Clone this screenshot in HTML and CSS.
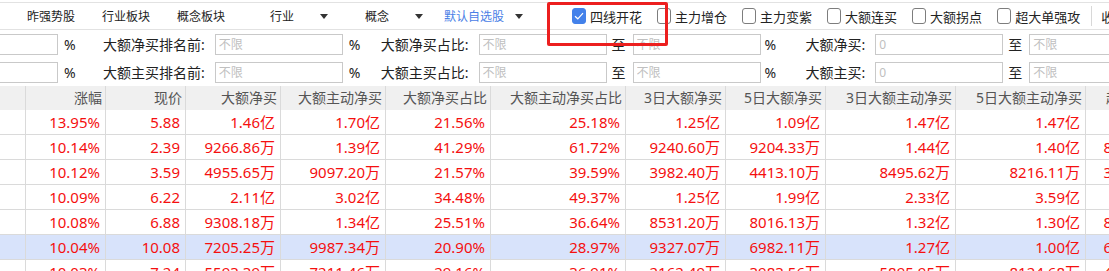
FILE: index.html
```html
<!DOCTYPE html>
<html lang="zh-CN">
<head>
  <meta charset="UTF-8" />
  <title>大额净买</title>
  <link rel="stylesheet" href="styles.css">
</head>
<body>

<div class="topbar">
  <span class="tab">昨强势股</span>
  <span class="tab">行业板块</span>
  <span class="tab">概念板块</span>
  <span class="dd dd-industry">行业<i class="arrow"></i></span>
  <span class="dd dd-concept">概念<i class="arrow"></i></span>
  <span class="dd dd-fav"><span class="fav">默认自选股</span><i class="arrow"></i></span>
  <label class="check first on"><span class="box"><svg width="10" height="8" viewBox="0 0 10 8"><path d="M1 4.2l2.8 2.6L9 1.2" fill="none" stroke="#fff" stroke-width="1.2"/></svg></span>四线开花</label>
  <label class="check"><span class="box"></span>主力增仓</label>
  <label class="check"><span class="box"></span>主力变紫</label>
  <label class="check"><span class="box"></span>大额连买</label>
  <label class="check"><span class="box"></span>大额拐点</label>
  <label class="check"><span class="box"></span>超大单强攻</label>
  <span class="sep"></span>
  <span class="more">收起</span>
</div>
<div class="mark"></div>

<div class="filters">
  <div class="frow">
    <input class="fin lead">
    <span class="unit u-lead">%</span>
    <span class="flabel">大额净买排名前:</span>
    <input class="fin" placeholder="不限">
    <span class="unit u-pct">%</span>
    <span class="flabel">大额净买占比:</span>
    <input class="fin" placeholder="不限">
    <span class="unit u-to">至</span>
    <input class="fin" placeholder="不限">
    <span class="unit u-lead u-mid">%</span>
    <span class="flabel">大额净买:</span>
    <input class="fin" placeholder="0">
    <span class="unit u-to">至</span>
    <input class="fin" placeholder="不限">
  </div>
  <div class="frow">
    <input class="fin lead">
    <span class="unit u-lead">%</span>
    <span class="flabel">大额主买排名前:</span>
    <input class="fin" placeholder="不限">
    <span class="unit u-pct">%</span>
    <span class="flabel">大额主买占比:</span>
    <input class="fin" placeholder="不限">
    <span class="unit u-to">至</span>
    <input class="fin" placeholder="不限">
    <span class="unit u-lead u-mid">%</span>
    <span class="flabel">大额主买:</span>
    <input class="fin" placeholder="0">
    <span class="unit u-to">至</span>
    <input class="fin" placeholder="不限">
  </div>
</div>

<div class="grid" id="grid"></div>

<script>
const headers = ["", "涨幅", "现价", "大额净买", "大额主动净买", "大额净买占比", "大额主动净买占比",
  "3日大额净买", "5日大额净买", "3日大额主动净买", "5日大额主动净买", "超大单净买"];

// first column (name) is scrolled out of view, so it stays empty
const rows = [
  ["13.95%", "5.88", "1.46亿", "1.70亿", "21.56%", "25.18%", "1.25亿", "1.09亿", "1.47亿", "1.47亿", "1.12亿"],
  ["10.14%", "2.39", "9266.86万", "1.39亿", "41.29%", "61.72%", "9240.60万", "9204.33万", "1.44亿", "1.40亿", "8352.17万"],
  ["10.12%", "3.59", "4955.65万", "9097.20万", "21.57%", "39.59%", "3982.40万", "4413.10万", "8495.62万", "8216.11万", "3617.42万"],
  ["10.09%", "6.22", "2.11亿", "3.02亿", "34.48%", "49.37%", "1.25亿", "1.99亿", "2.33亿", "3.59亿", "2.06亿"],
  ["10.08%", "6.88", "9308.18万", "1.34亿", "25.51%", "36.64%", "8531.20万", "8016.13万", "1.32亿", "1.30亿", "8143.65万"],
  ["10.04%", "10.08", "7205.25万", "9987.34万", "20.90%", "28.97%", "9327.07万", "6982.11万", "1.27亿", "1.00亿", "6210.38万"],
  ["10.03%", "7.24", "5593.39万", "7211.46万", "29.16%", "36.91%", "2162.49万", "3983.56万", "5895.95万", "8124.68万", "4425.19万"]
];
const selected = 5;

const grid = document.getElementById("grid");
grid.innerHTML =
  headers.map(h => `<div class="hcell">${h}</div>`).join("") +
  rows.map((r, i) => ["", ...r].map(v =>
    `<div class="cell${i === selected ? " sel" : ""}">${v}</div>`
  ).join("")).join("");
</script>

</body>
</html>
```

FILE: styles.css
```css
body {
  margin: 0;
  width: 1109px;
  height: 271px;
  overflow: hidden;
  position: relative;
  background: #fff;
  color: #222;
  font-family: "Noto Sans", "Noto Sans CJK SC", sans-serif;
}

/* top bar */
.topbar {
  margin-top: 2px;
  height: 26px;
  border-top: 1px solid #e2e2e2;
  border-bottom: 1px solid #e2e2e2;
  display: flex;
  align-items: center;
  padding-left: 27px;
  font-size: 12px;
  white-space: nowrap;
}

.topbar > * {
  flex: none;
}

.tab {
  margin-right: 27px;
  color: #222;
}

.dd {
  display: flex;
  align-items: center;
  justify-content: space-between;
  width: 58px;
}

.dd-industry { margin-left: 18px; }
.dd-concept { margin-left: 37px; }
.dd-fav { margin-left: 21px; width: 79px; }

.fav { color: #4a80e6; }

.arrow {
  width: 0;
  height: 0;
  border-left: 4px solid transparent;
  border-right: 4px solid transparent;
  border-top: 5px solid #333;
}

.check {
  display: flex;
  align-items: center;
  gap: 4px;
  margin-right: 15px;
  font-size: 13px;
  color: #222;
}

.check.first { margin-left: 49px; }

.box {
  width: 12px;
  height: 14px;
  border: 1px solid #7d7d7d;
  border-radius: 3px;
  display: flex;
  align-items: center;
  justify-content: center;
  background: #fff;
}

.check.on .box {
  background: #4381ea;
  border-color: #4381ea;
}

.sep {
  width: 1px;
  height: 20px;
  background: #d8d8d8;
  margin-left: -4px;
}

.more {
  margin-left: 9px;
  font-size: 13px;
}

.mark {
  position: absolute;
  left: 547px;
  top: 2px;
  width: 121px;
  height: 44px;
  box-sizing: border-box;
  border: 3px solid #ec1f1f;
  border-radius: 2px;
}

/* filters */
.filters {
  font-size: 14px;
  white-space: nowrap;
}

.frow {
  display: flex;
  align-items: center;
  height: 28px;
}

.frow > * {
  flex: none;
}

.fin {
  width: 128px;
  height: 21px;
  box-sizing: border-box;
  border: 1px solid #c9c9c9;
  padding: 0 3px;
  font-family: inherit;
  font-size: 12px;
  outline: none;
}

.fin::placeholder { color: #c0c0c0; }

.fin.lead { margin-left: -70px; }

.unit {
  box-sizing: border-box;
}

.u-lead { width: 45px; padding-left: 6px; }
.u-mid { padding-left: 4px; }
.u-pct { width: 38px; padding-left: 6px; }
.u-to { width: 26px; padding-left: 5px; }

.flabel {
  margin-right: 10px;
}

/* table */
.grid {
  display: grid;
  grid-template-columns: 26px 80px 80px 95px 105px 105px 135px 100px 100px 130px 130px 94px;
  width: 1180px;
}

.hcell,
.cell {
  box-sizing: border-box;
  border-right: 1px solid #dadada;
  text-align: right;
  white-space: nowrap;
  overflow: hidden;
}

.hcell {
  height: 24px;
  line-height: 24px;
  padding-right: 3px;
  background: #f0f0f0;
  color: #555;
  font-size: 14px;
}

.cell {
  height: 25px;
  line-height: 24px;
  padding-right: 5px;
  border-bottom: 1px solid #dadada;
  color: #f50f0f;
  font-size: 15px;
}

.cell.sel {
  background: #d8e3fb;
}
```
